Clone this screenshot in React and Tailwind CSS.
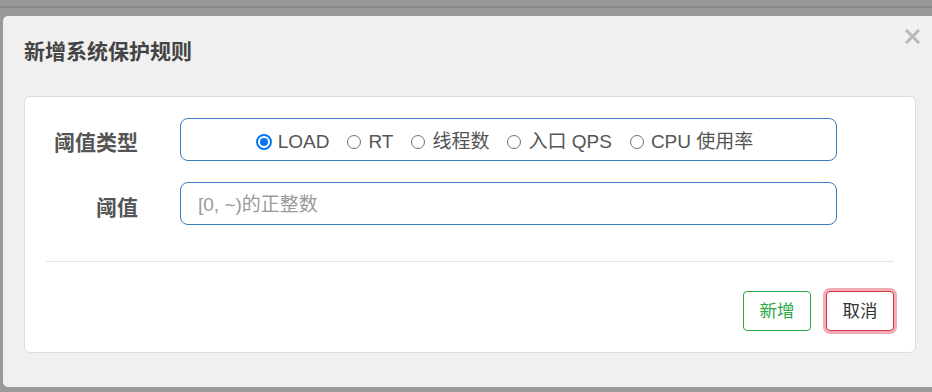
import { useState } from 'react'

const options = ['LOAD', 'RT', '线程数', '入口 QPS', 'CPU 使用率']

function Radio({ checked, label, onClick }) {
  return (
    <label onClick={onClick} className="flex items-center gap-[6px] cursor-pointer">
      {checked ? (
        <span className="w-[16px] h-[16px] rounded-full border-[2px] border-[#0a74f0] flex items-center justify-center bg-white">
          <span className="w-[8px] h-[8px] rounded-full bg-[#0a74f0]" />
        </span>
      ) : (
        <span className="w-[14px] h-[14px] mx-[1px] rounded-full border border-[#6f6f6f] bg-white" />
      )}
      <span>{label}</span>
    </label>
  )
}

export default function App() {
  const [type, setType] = useState(0)
  const [value, setValue] = useState('')

  return (
    <div className="w-[932px] h-[392px] overflow-hidden bg-[#999999] font-['Liberation_Sans','Noto_Sans_CJK_SC',sans-serif]">
      <div className="h-[6px]" />
      <div className="h-[2px] bg-[#8a8a8a]" />
      <div className="h-[8px]" />
      <div className="ml-[3px] w-[934px] h-[371px] bg-[#f0f0f0] rounded-[5px] flex flex-col">
        {/* header */}
        <div className="h-[80px] flex justify-between pl-[21px] pr-[17px]">
          <h4 className="mt-[22px] text-[21px] leading-[28px] font-bold text-[#444]">新增系统保护规则</h4>
          <button className="mt-[13px] w-[15px] h-[15px] text-[#b8b8b8]">
            <svg width="15" height="15" viewBox="0 0 15 15">
              <path d="M2 2 L13 13 M13 2 L2 13" stroke="currentColor" strokeWidth="3" strokeLinecap="square" />
            </svg>
          </button>
        </div>

        {/* body */}
        <div className="mx-[21px] bg-white border border-[#dddddd] rounded-[6px] px-[21px] pt-[21px] pb-[21px]">
          <div className="flex items-center">
            <label className="w-[92px] text-right mt-[7px] text-[21px] font-bold text-[#555]">阈值类型</label>
            <div className="ml-[42px] w-[657px] h-[43px] border border-[#3a7bbf] rounded-[8px] flex items-center justify-center gap-[17px] pt-[5px] pr-[8px] text-[19px] text-[#555]">
              {options.map((o, i) => (
                <Radio key={o} label={o} checked={type === i} onClick={() => setType(i)} />
              ))}
            </div>
          </div>

          <div className="flex items-center mt-[21px]">
            <label className="w-[92px] text-right mt-[8px] text-[21px] font-bold text-[#555]">阈值</label>
            <input
              type="text"
              value={value}
              onChange={(e) => setValue(e.target.value)}
              placeholder="[0, ~)的正整数"
              className="ml-[42px] w-[657px] h-[43px] border border-[#3a7bbf] rounded-[8px] pl-[17px] pt-[3px] text-[19px] text-[#555] placeholder:text-[#9a9a9a] outline-none"
            />
          </div>

          <div className="mt-[36px] h-px bg-[#e5e5e5]" />

          <div className="mt-[29px] flex justify-end gap-[15px]">
            <button className="w-[68px] h-[40px] border border-[#28a745] rounded-[4px] text-[17.5px] text-[#28a745] bg-white">
              新增
            </button>
            <button className="w-[68px] h-[40px] border border-[#dc3545] rounded-[4px] ring-[3px] ring-[#dc3545]/40 text-[17.5px] text-[#333] bg-white">
              取消
            </button>
          </div>
        </div>
      </div>
    </div>
  )
}
